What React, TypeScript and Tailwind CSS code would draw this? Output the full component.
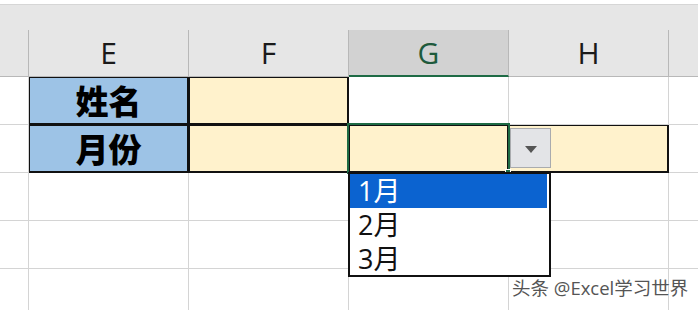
import React from "react";

type Cell = { text?: string; fill?: string; boxed?: boolean };

const font = { fontFamily: '"Open Sans", "Noto Sans CJK SC", sans-serif' };

const rows: Cell[][] = [
  [
    { text: "姓名", fill: "bg-[#9dc3e6]", boxed: true },
    { fill: "bg-[#fff2cc]", boxed: true },
    {},
    {},
  ],
  [
    { text: "月份", fill: "bg-[#9dc3e6]", boxed: true },
    { fill: "bg-[#fff2cc]", boxed: true },
    { fill: "bg-[#fff2cc]", boxed: true },
    { fill: "bg-[#fff2cc]", boxed: true },
  ],
  [{}, {}, {}, {}],
  [{}, {}, {}, {}],
  [{}, {}, {}, {}],
];

const GridRow = ({ cells }: { cells: Cell[] }) => (
  <div className="flex h-[48px] shrink-0">
    <div className="w-[29px] shrink-0 border-r border-b border-[#d4d4d4] bg-white" />
    {cells.map((c, i) => (
      <div
        key={i}
        className={
          "w-[160px] shrink-0 border-r border-b flex items-center justify-center " +
          (c.fill ?? "bg-white") +
          (c.boxed ? " border-[#111] shadow-[inset_0_0_0_1px_#111]" : " border-[#d4d4d4]")
        }
      >
        {c.text && (
          <span className="text-[33px] font-black leading-none text-black" style={{ fontFamily: '"Noto Sans CJK SC", sans-serif' }}>
            {c.text}
          </span>
        )}
      </div>
    ))}
    <div className="flex-1 border-b border-[#d4d4d4] bg-white" />
  </div>
);

export default function App() {
  return (
    <div className="relative w-[698px] h-[310px] overflow-hidden bg-white" style={font}>
      {/* top band */}
      <div className="h-[4px] bg-white" />
      <div className="h-[26px] bg-[#e6e6e6] border-t border-[#d6d6d6]" />

      {/* column headers */}
      <div className="flex h-[47px] bg-[#e6e6e6]">
        <div className="w-[29px] shrink-0 border-r border-b border-[#b8b8b8]" />
        {["E", "F", "G", "H"].map((l) => (
          <div
            key={l}
            className={
              "w-[160px] shrink-0 border-r border-[#b8b8b8] flex items-center justify-center text-[30px] leading-none " +
              (l === "G"
                ? "bg-[#d2d2d2] border-b-2 border-b-[#1e6b45] text-[#1e5a3c]"
                : "border-b text-[#1a1a1a]")
            }
          >
            {l}
          </div>
        ))}
        <div className="flex-1 border-b border-[#b8b8b8]" />
      </div>

      {rows.map((r, i) => (
        <GridRow key={i} cells={r} />
      ))}

      {/* active cell G2 */}
      <div className="absolute left-[347px] top-[123px] w-[163px] h-[51px] border-2 border-[#1e6b45]" />
      <div className="absolute left-[505px] top-[169px] w-[6px] h-[6px] bg-[#1e6b45] border border-white" />

      {/* dropdown button */}
      <div className="absolute left-[510px] top-[128px] w-[41px] h-[40px] bg-[#e3e4e7] border border-[#a9abae] flex items-center justify-center">
        <svg width="12" height="7" viewBox="0 0 12 7" className="mt-[3px]">
          <path d="M0 0 H12 L6 7 Z" fill="#555" />
        </svg>
      </div>

      {/* dropdown list */}
      <div className="absolute left-[348px] top-[172px] w-[203px] h-[105px] bg-white border-2 border-[#111] pr-[2px] flex flex-col text-[27px] leading-none">
        <div className="h-[34px] bg-[#0b63d0] text-white flex items-center pl-[8px]">1月</div>
        <div className="h-[34px] text-[#111] flex items-center pl-[8px]">2月</div>
        <div className="h-[34px] text-[#111] flex items-center pl-[8px]">3月</div>
      </div>

      {/* watermark */}
      <div
        className="absolute left-[512px] top-[279px] text-[18.5px] leading-none text-[#555] whitespace-nowrap"
        style={{ textShadow: "0 0 2px #fff, 0 0 1px #fff" }}
      >
        头条 @Excel学习世界
      </div>
    </div>
  );
}
